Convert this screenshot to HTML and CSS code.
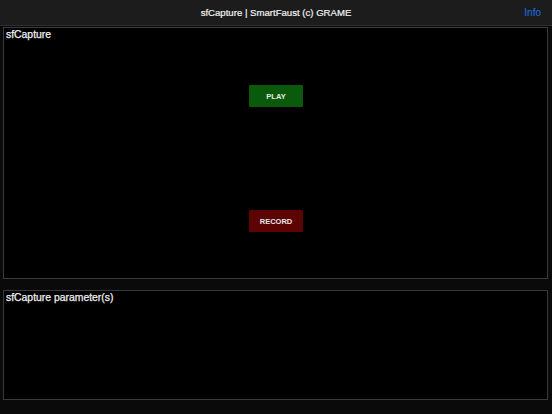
FILE: index.html
```html
<!DOCTYPE html>
<html>
<head>
<meta charset="utf-8">
<link rel="stylesheet" href="styles.css">
</head>
<body>
<header class="navbar">
  <div class="nav-title">sfCapture | SmartFaust (c) GRAME</div>
  <a class="nav-info">Info</a>
</header>
<main class="content">
  <section class="panel panel-main">
    <div class="panel-label">sfCapture</div>
    <div class="buttons">
      <button class="btn btn-play">PLAY</button>
      <button class="btn btn-record">RECORD</button>
    </div>
  </section>
  <section class="panel panel-params">
    <div class="panel-label">sfCapture parameter(s)</div>
  </section>
</main>
</body>
</html>
```
FILE: styles.css
```css
html, body {
  margin: 0;
  padding: 0;
  background: #0a0a0a;
  width: 552px;
  height: 414px;
  overflow: hidden;
  font-family: "Liberation Sans", Arial, sans-serif;
  color: #fff;
}
.navbar {
  height: 25px;
  background: #1c1c1c;
  border-bottom: 1px solid #2e2e2e;
  display: flex;
  align-items: center;
  justify-content: center;
  position: relative;
}
.nav-title {
  font-size: 9.6px;
  color: #f2f2f2;
  -webkit-text-stroke: 0.2px #f2f2f2;
}
.nav-info {
  position: absolute;
  right: 11px;
  top: 7px;
  font-size: 10px;
  color: #1f6ee6;
}
.content {
  padding: 1px 4px 0 3px;
  display: flex;
  flex-direction: column;
  gap: 11px;
}
.panel {
  border: 1px solid #3a3a3a;
  background: #000;
  position: relative;
}
.panel-main {
  height: 250px;
}
.panel-params {
  height: 108px;
}
.panel-label {
  font-size: 10.4px;
  color: #f0f0f0;
  -webkit-text-stroke: 0.25px #f0f0f0;
  padding: 1px 0 0 2px;
}
.buttons {
  display: flex;
  flex-direction: column;
  align-items: center;
  gap: 103px;
  margin-top: 45px;
  margin-left: 1px;
}
.btn {
  width: 54px;
  height: 22px;
  border: none;
  border-radius: 1px;
  font-family: "Liberation Sans", Arial, sans-serif;
  font-size: 7.5px;
  font-weight: bold;
  color: #e8e8e8;
  padding: 0;
}
.btn-play {
  background: #0b5a0b;
}
.btn-record {
  background: #5c0303;
}
```
